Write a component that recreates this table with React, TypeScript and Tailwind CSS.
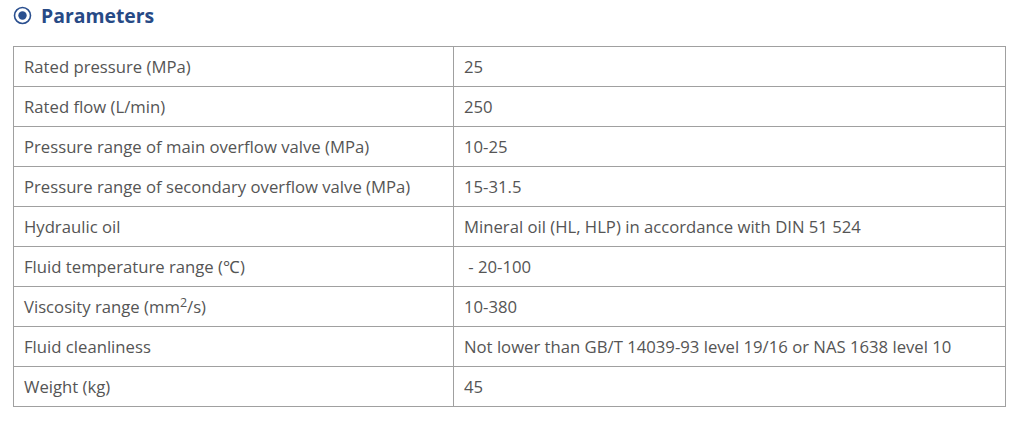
const rows: [string, React.ReactNode][] = [
  ["Rated pressure (MPa)", "25"],
  ["Rated flow (L/min)", "250"],
  ["Pressure range of main overflow valve (MPa)", "10-25"],
  ["Pressure range of secondary overflow valve (MPa)", "15-31.5"],
  ["Hydraulic oil", "Mineral oil (HL, HLP) in accordance with DIN 51 524"],
  ["Fluid temperature range (℃)", "\u00a0- 20-100"],
  ["Viscosity range (mm2/s)", "10-380"],
  ["Fluid cleanliness", "Not lower than GB/T 14039-93 level 19/16 or NAS 1638 level 10"],
  ["Weight (kg)", "45"],
];

function Label({ text }: { text: string }) {
  if (text.includes("mm2/s")) {
    return (
      <>
        Viscosity range (mm<sup className="text-[12.5px]">2</sup>/s)
      </>
    );
  }
  return <>{text}</>;
}

export default function App() {
  return (
    <div className="w-[1019px] h-[423px] bg-white font-['Open_Sans',sans-serif]">
      <div className="flex items-center gap-[9px] pl-[13px] pt-[1px] h-[30px]">
        <svg width="19" height="19" viewBox="0 0 19 19">
          <circle cx="9.5" cy="9.5" r="8" fill="none" stroke="#2a4f8f" strokeWidth="1.6" />
          <circle cx="9.5" cy="9.5" r="4.2" fill="#2a4f8f" />
        </svg>
        <h2 className="text-[19.4px] font-bold text-[#274a86] leading-none">Parameters</h2>
      </div>
      <table className="mt-[16px] ml-[13px] w-[993px] border-collapse text-[16.7px] text-[#555]">
        <tbody>
          {rows.map(([k, v]) => (
            <tr key={k} className="h-[40px]">
              <td className="w-[440px] border border-[#a0a0a0] pl-[10px] pt-[2px] align-middle leading-none">
                <Label text={k} />
              </td>
              <td className="border border-[#a0a0a0] pl-[10px] pt-[2px] align-middle leading-none">{v}</td>
            </tr>
          ))}
        </tbody>
      </table>
    </div>
  );
}
